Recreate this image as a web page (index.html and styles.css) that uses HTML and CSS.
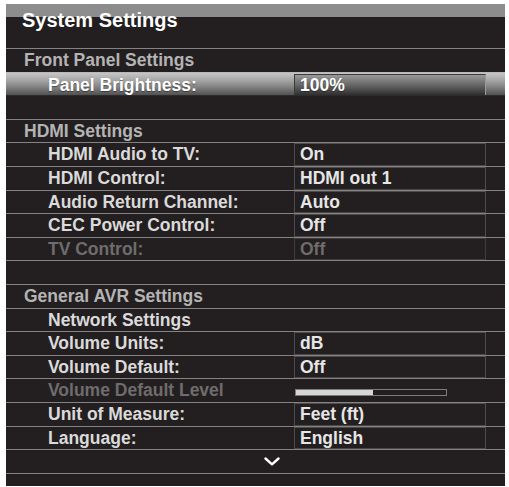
FILE: index.html
```html
<!DOCTYPE html>
<html>
<head>
<meta charset="utf-8">
<link rel="stylesheet" href="styles.css">
</head>
<body>
<div class="panel">
  <div class="title">System Settings</div>
  <div class="row section"><span>Front Panel Settings</span></div>
  <div class="row item active">
    <span class="label">Panel Brightness:</span>
    <span class="value">100%</span>
  </div>
  <div class="row blank after-active"></div>
  <div class="row section"><span>HDMI Settings</span></div>
  <div class="row item">
    <span class="label">HDMI Audio to TV:</span>
    <span class="value">On</span>
  </div>
  <div class="row item">
    <span class="label">HDMI Control:</span>
    <span class="value">HDMI out 1</span>
  </div>
  <div class="row item">
    <span class="label">Audio Return Channel:</span>
    <span class="value">Auto</span>
  </div>
  <div class="row item">
    <span class="label">CEC Power Control:</span>
    <span class="value">Off</span>
  </div>
  <div class="row item disabled">
    <span class="label">TV Control:</span>
    <span class="value">Off</span>
  </div>
  <div class="row blank"></div>
  <div class="row section"><span>General AVR Settings</span></div>
  <div class="row item">
    <span class="label">Network Settings</span>
  </div>
  <div class="row item">
    <span class="label">Volume Units:</span>
    <span class="value">dB</span>
  </div>
  <div class="row item">
    <span class="label">Volume Default:</span>
    <span class="value">Off</span>
  </div>
  <div class="row item disabled">
    <span class="label">Volume Default Level</span>
    <span class="slider"><span class="fill" style="width:51%"></span></span>
  </div>
  <div class="row item">
    <span class="label">Unit of Measure:</span>
    <span class="value">Feet (ft)</span>
  </div>
  <div class="row item">
    <span class="label">Language:</span>
    <span class="value">English</span>
  </div>
  <div class="row more">
    <svg class="chevron" width="16" height="9" viewBox="0 0 16 9">
      <polyline points="1.5,1.5 8,7.3 14.5,1.5" fill="none" stroke="#ffffff" stroke-width="2.4" stroke-linecap="round" stroke-linejoin="round"/>
    </svg>
  </div>
  <div class="footer"></div>
</div>
</body>
</html>
```

FILE: styles.css
```css
html, body {
  margin: 0;
  padding: 0;
  background: #ffffff;
}

body {
  font-family: "Liberation Sans", Arial, Helvetica, sans-serif;
  font-weight: bold;
}

.panel {
  margin: 4px 0 0 6px;
  width: 499px;
  background: #231f20;
  display: flex;
  flex-direction: column;
}

.title {
  box-sizing: border-box;
  height: 44px;
  padding: 4px 0 0 16px;
  font-size: 20px;
  line-height: 24px;
  color: #ffffff;
  background: linear-gradient(#8d8d8d 0, #8d8d8d 13px, #231f20 13px);
}

.row {
  box-sizing: border-box;
  height: 23.6px;
  border-top: 1px solid #838383;
  font-size: 17.5px;
  line-height: 22.6px;
  color: #dadada;
}

.section {
  padding-left: 18px;
  color: #b4b4b4;
}

.item {
  display: grid;
  grid-template-columns: 246px 192px;
  padding-left: 42px;
  align-items: stretch;
}

.label {
  white-space: nowrap;
}

.value {
  box-sizing: border-box;
  border: 1px solid #4f4c4c;
  border-bottom-color: #4a4747;
  padding-left: 5px;
  line-height: 20.6px;
  margin-bottom: 1px;
  color: #e6e6e6;
  white-space: nowrap;
}

.active {
  border-top-color: #b9b9b9;
  background: linear-gradient(#c6c6c6 0%, #a4a4a4 35%, #7a7a7a 70%, #505050 100%);
  color: #ffffff;
  text-shadow: 0 1px 1px rgba(0, 0, 0, 0.45);
  padding-top: 1px;
}

.active .label {
  line-height: 22px;
}

.active .value {
  margin: 0 0 1px 0;
  line-height: 20px;
  border-color: #3a3a3a;
  border-right-color: #9a9a9a;
  background: linear-gradient(#9a9a9a 0%, #6c6c6c 45%, #2f2f2f 100%);
  color: #ffffff;
}

.after-active {
  border-top-color: #2e2a2b;
}

.disabled {
  color: #6e6c6c;
}

.disabled .value {
  color: #6e6c6c;
  border-color: #3f3c3c;
}

.slider {
  align-self: start;
  margin-top: 10px;
  margin-left: 1px;
  box-sizing: border-box;
  width: 152px;
  height: 7px;
  border: 1px solid #7c7c7c;
  background: #231f20;
  display: flex;
}

.fill {
  display: block;
  height: 100%;
  background: #d6d6d6;
}

.more {
  display: flex;
  align-items: center;
  padding-left: 258px;
}

.chevron {
  display: block;
}

.footer {
  height: 13px;
  border-top: 1px solid #838383;
  box-sizing: border-box;
}
```
